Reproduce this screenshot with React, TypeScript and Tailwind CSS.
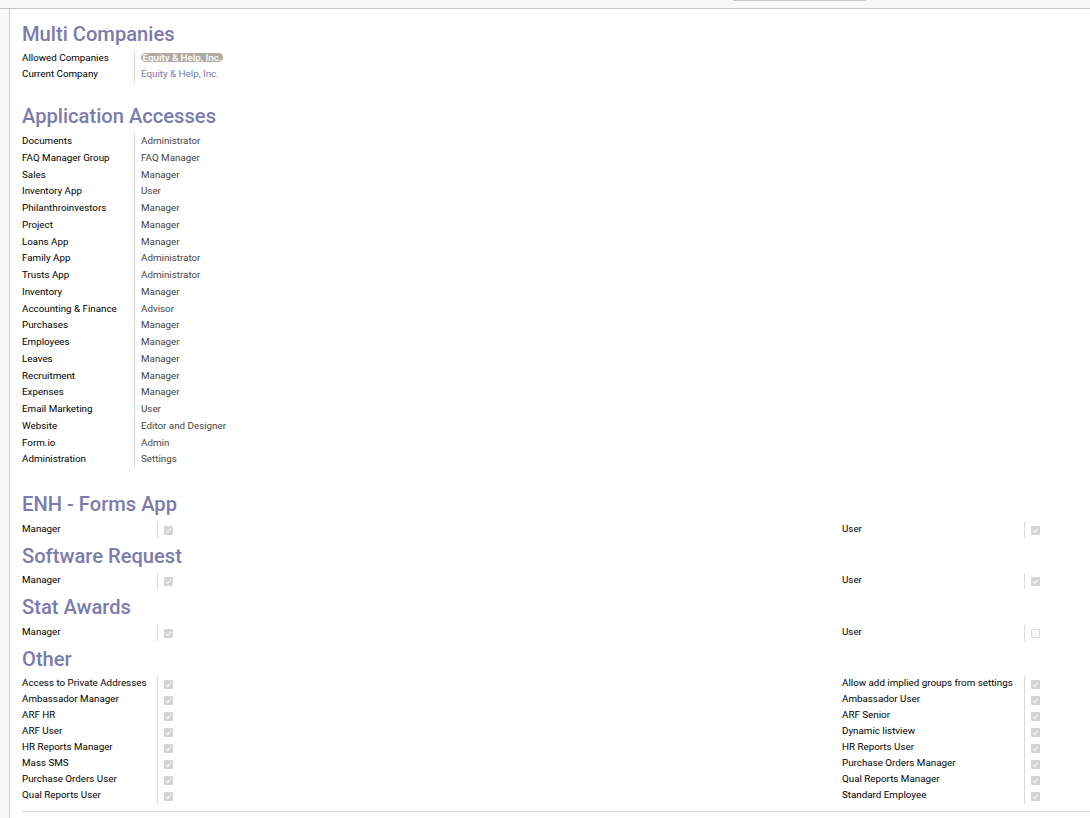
import React from "react";

const accesses = [
  ["Documents", "Administrator"],
  ["FAQ Manager Group", "FAQ Manager"],
  ["Sales", "Manager"],
  ["Inventory App", "User"],
  ["Philanthroinvestors", "Manager"],
  ["Project", "Manager"],
  ["Loans App", "Manager"],
  ["Family App", "Administrator"],
  ["Trusts App", "Administrator"],
  ["Inventory", "Manager"],
  ["Accounting & Finance", "Advisor"],
  ["Purchases", "Manager"],
  ["Employees", "Manager"],
  ["Leaves", "Manager"],
  ["Recruitment", "Manager"],
  ["Expenses", "Manager"],
  ["Email Marketing", "User"],
  ["Website", "Editor and Designer"],
  ["Form.io", "Admin"],
  ["Administration", "Settings"],
];

const otherLeft = [
  "Access to Private Addresses",
  "Ambassador Manager",
  "ARF HR",
  "ARF User",
  "HR Reports Manager",
  "Mass SMS",
  "Purchase Orders User",
  "Qual Reports User",
];

const otherRight = [
  "Allow add implied groups from settings",
  "Ambassador User",
  "ARF Senior",
  "Dynamic listview",
  "HR Reports User",
  "Purchase Orders Manager",
  "Qual Reports Manager",
  "Standard Employee",
];

function Check({ on = true }: { on?: boolean }) {
  return (
    <span className={`flex h-[9px] w-[9px] items-center justify-center rounded-[1px] ${on ? "bg-[#d4d4d4]" : "border border-[#dcdcdc] bg-[#f8f8f8]"}`}>
      {on && (
        <svg viewBox="0 0 9 9" className="h-[9px] w-[9px]" fill="none" stroke="#f4f4f4" strokeWidth="1.3">
          <path d="M2 4.6 L3.8 6.4 L7 2.6" />
        </svg>
      )}
    </span>
  );
}

function Heading({ children, className }: { children: React.ReactNode; className?: string }) {
  return <h2 className={`text-[20.15px] leading-[26px] font-medium text-[#7c7bad] ${className || ""}`}>{children}</h2>;
}

function CheckGroup({ left, right }: { left: [string, boolean][]; right: [string, boolean][] }) {
  return (
    <div className="flex">
      <div className="flex w-[820px]">
        <div className="w-[136px] border-r border-[#d9d9d9]">
          {left.map(([t]) => (
            <div key={t} className="h-4 leading-[14px]">{t}</div>
          ))}
        </div>
        <div className="pl-[6px]">
          {left.map(([t, on]) => (
            <div key={t} className="h-4 pt-1"><Check on={on} /></div>
          ))}
        </div>
      </div>
      <div className="flex">
        <div className="w-[183px] border-r border-[#d9d9d9]">
          {right.map(([t]) => (
            <div key={t} className="h-4 leading-[14px]">{t}</div>
          ))}
        </div>
        <div className="pl-[6px]">
          {right.map(([t, on]) => (
            <div key={t} className="h-4 pt-1"><Check on={on} /></div>
          ))}
        </div>
      </div>
    </div>
  );
}

export default function App() {
  return (
    <div className="h-[818px] w-[1090px] overflow-hidden bg-white font-['Roboto',sans-serif] text-[9.8px] text-black">
      <div className="relative h-[9px] border-b border-[#c4c4c4] bg-[#f8f8f8]">
        <div className="absolute left-[733px] top-0 h-px w-[133px] bg-[#c9c9c9]" />
      </div>
      <div className="flex h-[809px]">
        <div className="w-[10px] border-r border-[#d0d0d0] bg-[#f8f8f8]" />
        <div className="flex-1 pl-3 pt-[12px]">
          <Heading>Multi Companies</Heading>
          <div className="mt-[4px] flex">
            <div className="w-[113px] border-r border-[#d9d9d9]">
              <div className="h-4 leading-[14px]">Allowed Companies</div>
              <div className="h-4 leading-[14px]">Current Company</div>
            </div>
            <div className="pl-[6px]">
              <div className="h-4 pt-[2px]">
                <span className="block h-[9px] w-[82px] rounded-full bg-[#b0aba7] text-center leading-[10px] font-medium text-white">Equity &amp; Help, Inc.</span>
              </div>
              <div className="h-4 leading-[14px] text-[#7c7bad]">Equity &amp; Help, Inc.</div>
            </div>
          </div>

          <Heading className="mt-[20px]">Application Accesses</Heading>
          <div className="mt-[4px] flex">
            <div className="w-[113px] border-r border-[#d9d9d9]">
              {accesses.map(([a]) => (
                <div key={a} className="h-[16.75px] leading-[15px]">{a}</div>
              ))}
            </div>
            <div className="pl-[6px]">
              {accesses.map(([a, b]) => (
                <div key={a} className="h-[16.75px] leading-[15px] text-[#444444]">{b}</div>
              ))}
            </div>
          </div>

          <Heading className="mt-[23px] mb-[4.5px]">ENH - Forms App</Heading>
          <CheckGroup left={[["Manager", true]]} right={[["User", true]]} />
          <Heading className="mt-[5px] mb-[4.5px]">Software Request</Heading>
          <CheckGroup left={[["Manager", true]]} right={[["User", true]]} />
          <Heading className="mt-[5px] mb-[4.5px]">Stat Awards</Heading>
          <CheckGroup left={[["Manager", true]]} right={[["User", false]]} />
          <Heading className="mt-[5px] mb-[4.5px]">Other</Heading>
          <CheckGroup
            left={otherLeft.map((t): [string, boolean] => [t, true])}
            right={otherRight.map((t): [string, boolean] => [t, true])}
          />
          <div className="mt-[7px] border-t border-[#d9d9d9]" />
        </div>
      </div>
    </div>
  );
}
